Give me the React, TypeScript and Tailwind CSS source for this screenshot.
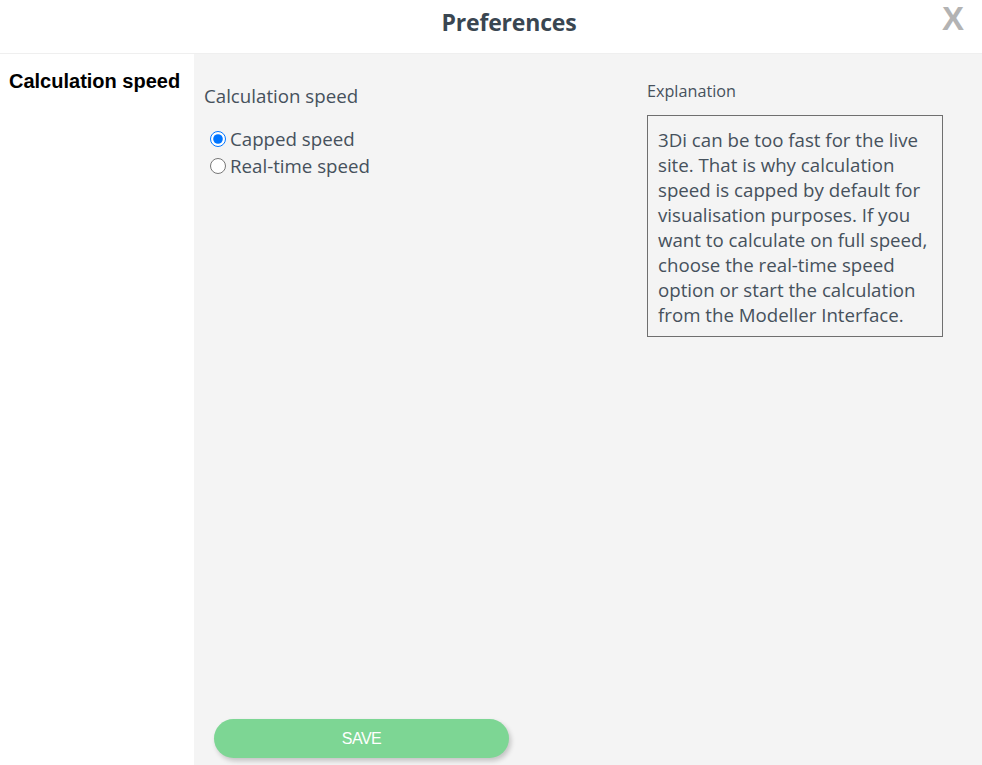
import { useState } from 'react';

function App() {
  const [speed, setSpeed] = useState('capped');

  return (
    <div className="h-[765px] w-[982px] flex flex-col bg-white font-['Open_Sans',sans-serif] text-[#46515c]">
      <header className="h-[54px] shrink-0 border-b border-[#efefef] flex items-center justify-center pb-[9px] pl-[36px] relative">
        <h1 className="text-[23px] font-bold text-[#3a4651] tracking-[-0.2px]">Preferences</h1>
        <button className="absolute right-[18px] top-[2px] text-[33px] leading-none font-bold text-[#b3b3b3] font-['Liberation_Sans',sans-serif]">
          X
        </button>
      </header>

      <div className="flex flex-1 min-h-0">
        <aside className="w-[194px] shrink-0 bg-white pl-[9px] pt-[12px]">
          <div className="font-['Liberation_Sans',sans-serif] font-bold text-[20px] text-black">Calculation speed</div>
        </aside>

        <main className="flex-1 bg-[#f4f4f4] flex flex-col pl-[10px] pr-[39px]">
          <div className="flex flex-1">
            <div className="flex-1 pt-[28px]">
              <div className="text-[18.7px]">Calculation speed</div>
              <div className="mt-[15px] flex flex-col text-[18.7px] leading-[27px]">
                <label className="flex items-center gap-[4px]">
                  <input
                    type="radio"
                    name="speed"
                    checked={speed === 'capped'}
                    onChange={() => setSpeed('capped')}
                    className="w-[16px] h-[16px] ml-[6px] accent-[#0075ff]"
                  />
                  Capped speed
                </label>
                <label className="flex items-center gap-[4px]">
                  <input
                    type="radio"
                    name="speed"
                    checked={speed === 'realtime'}
                    onChange={() => setSpeed('realtime')}
                    className="w-[16px] h-[16px] ml-[6px] accent-[#0075ff]"
                  />
                  Real-time speed
                </label>
              </div>
            </div>

            <div className="w-[296px] pt-[27px]">
              <div className="text-[16.2px] leading-[20px]">Explanation</div>
              <div className="mt-[14px] border border-[#6f6f6f] px-[10px] pt-[11px] pb-[9px] text-[18.7px] leading-[25px]">
                3Di can be too fast for the live site. That is why calculation speed is capped by default for
                visualisation purposes. If you want to calculate on full speed, choose the real-time speed option or
                start the calculation from the Modeller Interface.
              </div>
            </div>
          </div>

          <div className="pb-[7px] pl-[10px]">
            <button className="w-[295px] h-[39px] rounded-full bg-[#7dd694] text-white text-[16px] font-['Liberation_Sans',sans-serif] shadow-[2px_3px_5px_rgba(0,0,0,0.2)] tracking-[-0.5px]">
              SAVE
            </button>
          </div>
        </main>
      </div>
    </div>
  );
}

export default App;
